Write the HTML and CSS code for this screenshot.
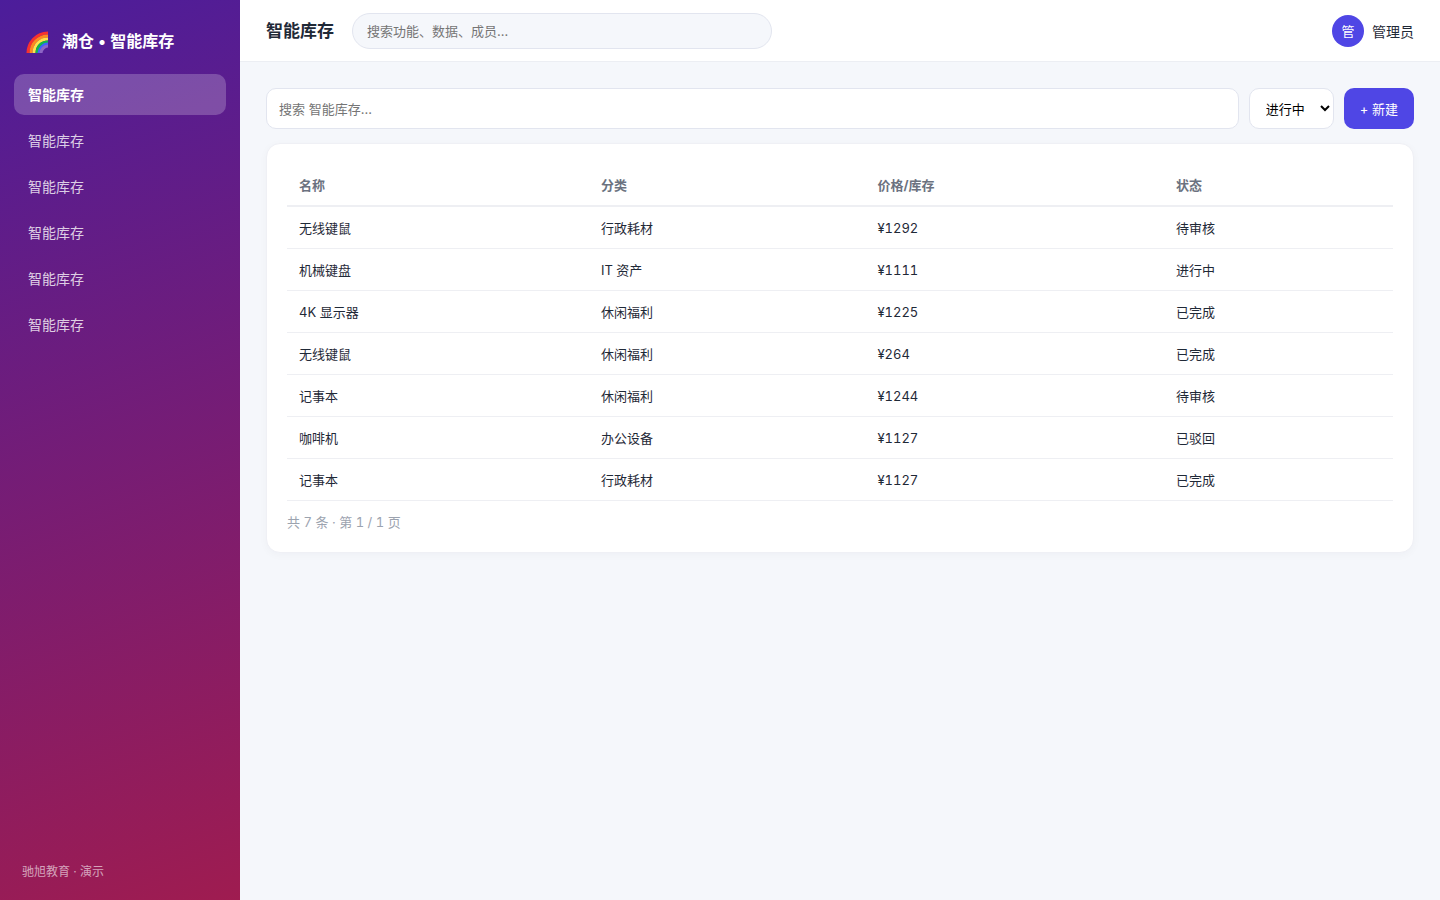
FILE: index.html
```html
<!DOCTYPE html>
<html lang="zh-CN">
  <head>
    <meta charset="UTF-8" />
    <title>潮仓 • 智能库存</title>
    <meta name="viewport" content="width=device-width, initial-scale=1" />
    <link rel="stylesheet" href="styles.css">
  </head>

  <body>
    <div class="app">
      <aside class="sidebar">
        <div class="brand">
          <svg class="brand-icon" width="24" height="24" viewBox="0 -1 24 24" fill="none" stroke-width="3" aria-hidden="true">
            <path stroke="#f8312f" d="M2 23C2 13 10 3 22 3" />
            <path stroke="#ff8a1f" d="M5 23C5 14 12 6 22 6" />
            <path stroke="#ffe34d" d="M8 23C8 15 14 9 22 9" />
            <path stroke="#12b64a" d="M11 23C11 17 15 12 22 12" />
            <path stroke="#3f5fff" d="M13 23C13 19 17 14 22 14" />
            <path stroke="#8d65c5" d="M15 23C15 20 18 16 22 16" />
          </svg>
          <span>潮仓 • 智能库存</span>
        </div>
        <nav class="nav">
          <a class="active" href="#">智能库存</a>
          <a href="#">智能库存</a>
          <a href="#">智能库存</a>
          <a href="#">智能库存</a>
          <a href="#">智能库存</a>
          <a href="#">智能库存</a>
        </nav>
        <div class="sidebar-foot">驰旭教育 · 演示</div>
      </aside>

      <div class="main">
        <header class="topbar">
          <h1>智能库存</h1>
          <input class="global-search" type="search" placeholder="搜索功能、数据、成员…" aria-label="搜索功能、数据、成员" />
          <div class="user">
            <span class="avatar">管</span>
            <span>管理员</span>
          </div>
        </header>

        <main class="content">
          <div class="toolbar">
            <input class="filter" type="text" placeholder="搜索 智能库存..." aria-label="搜索 智能库存" />
            <select class="status" aria-label="状态">
              <option>进行中</option>
              <option>待审核</option>
              <option>已完成</option>
              <option>已驳回</option>
            </select>
            <button class="btn" type="button">+ 新建</button>
          </div>

          <section class="card">
            <table>
              <thead>
                <tr><th>名称</th><th>分类</th><th>价格/库存</th><th>状态</th></tr>
              </thead>
              <tbody>
                <tr><td>无线键鼠</td><td>行政耗材</td><td>¥1292</td><td>待审核</td></tr>
                <tr><td>机械键盘</td><td>IT 资产</td><td>¥1111</td><td>进行中</td></tr>
                <tr><td>4K 显示器</td><td>休闲福利</td><td>¥1225</td><td>已完成</td></tr>
                <tr><td>无线键鼠</td><td>休闲福利</td><td>¥264</td><td>已完成</td></tr>
                <tr><td>记事本</td><td>休闲福利</td><td>¥1244</td><td>待审核</td></tr>
                <tr><td>咖啡机</td><td>办公设备</td><td>¥1127</td><td>已驳回</td></tr>
                <tr><td>记事本</td><td>行政耗材</td><td>¥1127</td><td>已完成</td></tr>
              </tbody>
            </table>
            <div class="pager">共 7 条 · 第 1 / 1 页</div>
          </section>
        </main>
      </div>
    </div>
  </body>
</html>
```
FILE: styles.css
```css
* {
  box-sizing: border-box;
}

body {
  margin: 0;
  background: #f5f7fb;
  color: #1f2937;
  font-family: Inter, "Noto Sans CJK SC", sans-serif;
  font-size: 14px;
  font-variant-numeric: tabular-nums;
}

input,
select,
button {
  font-family: inherit;
  font-size: 13px;
}

.app {
  display: flex;
  min-height: 100vh;
}

.sidebar {
  display: flex;
  flex-direction: column;
  flex: 0 0 240px;
  padding: 22px 14px 18px;
  background: linear-gradient(160deg, #4c1d9b, #9f1c50);
  color: #fff;
}

.brand {
  display: flex;
  align-items: center;
  gap: 12px;
  padding: 6px 10px 20px 12px;
  font-size: 16px;
  font-weight: 700;
  line-height: 26px;
}

.nav {
  display: flex;
  flex-direction: column;
  gap: 5px;
}

.nav a {
  padding: 10px 14px;
  border-radius: 10px;
  color: rgba(255, 255, 255, 0.8);
  line-height: 21px;
  text-decoration: none;
}

.nav a.active {
  background: rgba(255, 255, 255, 0.22);
  color: #fff;
  font-weight: 700;
}

.sidebar-foot {
  margin-top: auto;
  padding: 0 8px;
  color: rgba(255, 255, 255, 0.6);
  font-size: 12px;
  line-height: 20px;
}

.main {
  flex: 1;
  min-width: 0;
}

.topbar {
  display: flex;
  align-items: center;
  gap: 18px;
  height: 62px;
  padding: 0 26px;
  border-bottom: 1px solid #eceef3;
  background: #fff;
}

.topbar h1 {
  margin: 0;
  font-size: 17px;
  line-height: 24px;
}

.global-search {
  width: 420px;
  height: 36px;
  padding: 0 14px;
  border: 1px solid #e2e5ef;
  border-radius: 18px;
  background: #f5f7fb;
}

.user {
  display: flex;
  align-items: center;
  gap: 8px;
  margin-left: auto;
}

.avatar {
  display: flex;
  align-items: center;
  justify-content: center;
  width: 32px;
  height: 32px;
  border-radius: 50%;
  background: #4f46e5;
  color: #fff;
  font-size: 13px;
}

.content {
  padding: 26px;
}

.toolbar {
  display: flex;
  gap: 10px;
  height: 41px;
  margin-bottom: 14px;
}

.filter,
.status {
  border: 1px solid #e2e5ef;
  border-radius: 10px;
  background: #fff;
}

.filter {
  flex: 1;
  min-width: 0;
  padding: 0 12px;
}

.status {
  width: 85px;
  padding: 0 0 0 12px;
  color: #000;
}

.btn {
  padding: 0 16px;
  border: 0;
  border-radius: 10px;
  background: #4f46e5;
  color: #fff;
}

.card {
  padding: 20px;
  border: 1px solid #eff0f5;
  border-radius: 14px;
  background: #fff;
  box-shadow: 0 2px 8px rgba(31, 41, 55, 0.03);
}

table {
  width: 100%;
  border-collapse: collapse;
  table-layout: fixed;
  font-size: 13px;
  line-height: 21px;
}

th,
td {
  padding: 11px 12px 9px;
  border-bottom: 1px solid #eeeff3;
  text-align: left;
}

th {
  border-bottom-width: 2px;
  color: #6b7280;
}

th:nth-child(1) {
  width: 27.3%;
}

th:nth-child(2) {
  width: 25%;
}

th:nth-child(3) {
  width: 27%;
}

.pager {
  margin-top: 12px;
  color: #9ca3af;
  font-size: 13px;
  line-height: 19px;
}
```
